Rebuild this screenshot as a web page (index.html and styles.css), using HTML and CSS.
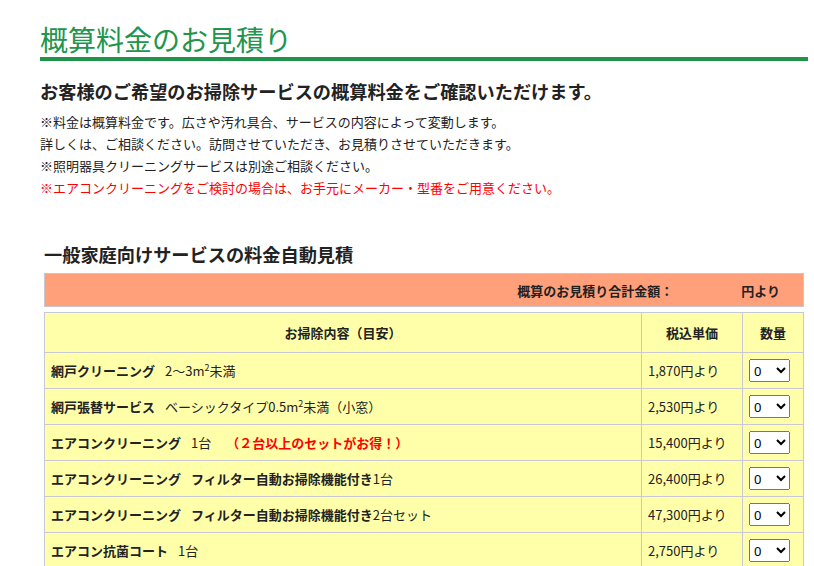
FILE: index.html
```html
<!DOCTYPE html>
<html lang="ja">
<head>
  <meta charset="UTF-8">
  <title>概算料金のお見積り</title>
  <link rel="stylesheet" href="styles.css">
</head>
<body>
  <div class="wrap">
    <h1 class="midashi">概算料金のお見積り</h1>
    <h2 class="lead">お客様のご希望のお掃除サービスの概算料金をご確認いただけます。</h2>
    <p class="chuui">※料金は概算料金です。広さや汚れ具合、サービスの内容によって変動します。</p>
    <p class="chuui">詳しくは、ご相談ください。訪問させていただき、お見積りさせていただきます。</p>
    <p class="chuui">※照明器具クリーニングサービスは別途ご相談ください。</p>
    <p class="chuui aka">※エアコンクリーニングをご検討の場合は、お手元にメーカー・型番をご用意ください。</p>

    <div class="mitsumori">
      <h3 class="komidashi">一般家庭向けサービスの料金自動見積</h3>

      <div class="goukei">
        <span class="goukei-label">概算のお見積り合計金額：</span>
        <span class="goukei-kingaku" id="goukei"></span>
        <span>円より</span>
      </div>

      <table class="hyou">
        <thead>
          <tr>
            <th class="col-naiyou">お掃除内容（目安）</th>
            <th class="col-tanka">税込単価</th>
            <th class="col-suuryou">数量</th>
          </tr>
        </thead>
        <tbody id="meisai"></tbody>
      </table>
    </div>
  </div>

  <script>
    const menu = [
      { mei: "網戸クリーニング", setsumei: "2～3m<sup>2</sup>未満", tanka: 1870 },
      { mei: "網戸張替サービス", setsumei: "ベーシックタイプ0.5m<sup>2</sup>未満（小窓）", tanka: 2530 },
      { mei: "エアコンクリーニング", setsumei: "1台<span class=\"otoku\">（２台以上のセットがお得！）</span>", tanka: 15400 },
      { mei: "エアコンクリーニング", setsumei: "<b>フィルター自動お掃除機能付き</b>1台", tanka: 26400 },
      { mei: "エアコンクリーニング", setsumei: "<b>フィルター自動お掃除機能付き</b>2台セット", tanka: 47300 },
      { mei: "エアコン抗菌コート", setsumei: "1台", tanka: 2750 }
    ];

    const meisai = document.getElementById("meisai");
    const goukei = document.getElementById("goukei");

    function keisan() {
      let total = 0;
      document.querySelectorAll(".suu").forEach(s => {
        total += menu[s.dataset.i].tanka * parseInt(s.value);
      });
      goukei.textContent = total ? total.toLocaleString("ja-JP") : "";
    }

    menu.forEach((m, i) => {
      const tr = document.createElement("tr");
      let opts = "";
      for (let n = 0; n <= 10; n++) opts += `<option value="${n}">${n}</option>`;
      tr.innerHTML = `
        <td class="col-naiyou"><strong>${m.mei}</strong>${m.setsumei}</td>
        <td class="col-tanka">${m.tanka.toLocaleString("ja-JP")}円より</td>
        <td class="col-suuryou"><select class="suu" data-i="${i}">${opts}</select></td>
      `;
      meisai.appendChild(tr);
    });

    document.querySelectorAll(".suu").forEach(s => s.addEventListener("change", keisan));
  </script>
</body>
</html>
```

FILE: styles.css
```css
body {
  margin: 0;
  font-family: "Noto Sans CJK JP", "Noto Sans", sans-serif;
  color: #222;
  background: #fff;
}

.wrap {
  padding: 21px 6px 0 40px;
}

.midashi {
  margin: 0;
  font-size: 28px;
  font-weight: normal;
  line-height: 36px;
  color: #21954c;
  border-bottom: 4px solid #21944b;
}

.lead {
  margin: 16px 0 6px;
  font-size: 18.2px;
  line-height: 28px;
  font-weight: bold;
}

.chuui {
  margin: 0;
  font-size: 13px;
  line-height: 22px;
}
.aka {
  color: #ff0000;
}

.mitsumori {
  margin: 41px 4px 0;
}

.komidashi {
  margin: 0 0 5px;
  font-size: 18.2px;
  line-height: 28px;
  font-weight: bold;
}

.goukei {
  display: flex;
  justify-content: flex-end;
  align-items: center;
  height: 32px;
  padding-right: 23px;
  background: #ffa07a;
  border: 1px solid #c8c8c8;
  font-size: 13px;
  font-weight: bold;
}
.goukei-kingaku {
  min-width: 68px;
  text-align: right;
}

.hyou {
  width: 100%;
  margin-top: 5px;
  border-collapse: collapse;
  background: #ffffaa;
  font-size: 13px;
}
.hyou th,
.hyou td {
  border: 1px solid #c9c9d4;
  padding: 0 6px;
}
.hyou th {
  height: 39px;
  font-weight: bold;
  text-align: center;
}
.hyou td {
  height: 35px;
}
.col-tanka {
  width: 88px;
}
.col-suuryou {
  width: 48px;
}
.hyou strong {
  margin-right: 10px;
}
.hyou b {
  font-weight: bold;
}
.hyou sup {
  font-size: 9px;
  line-height: 0;
}
.otoku {
  margin-left: 15px;
  color: #ff0000;
  font-weight: bold;
}
.suu {
  width: 41px;
  height: 23px;
  font-size: 13px;
  font-family: "Noto Sans", sans-serif;
}
```
